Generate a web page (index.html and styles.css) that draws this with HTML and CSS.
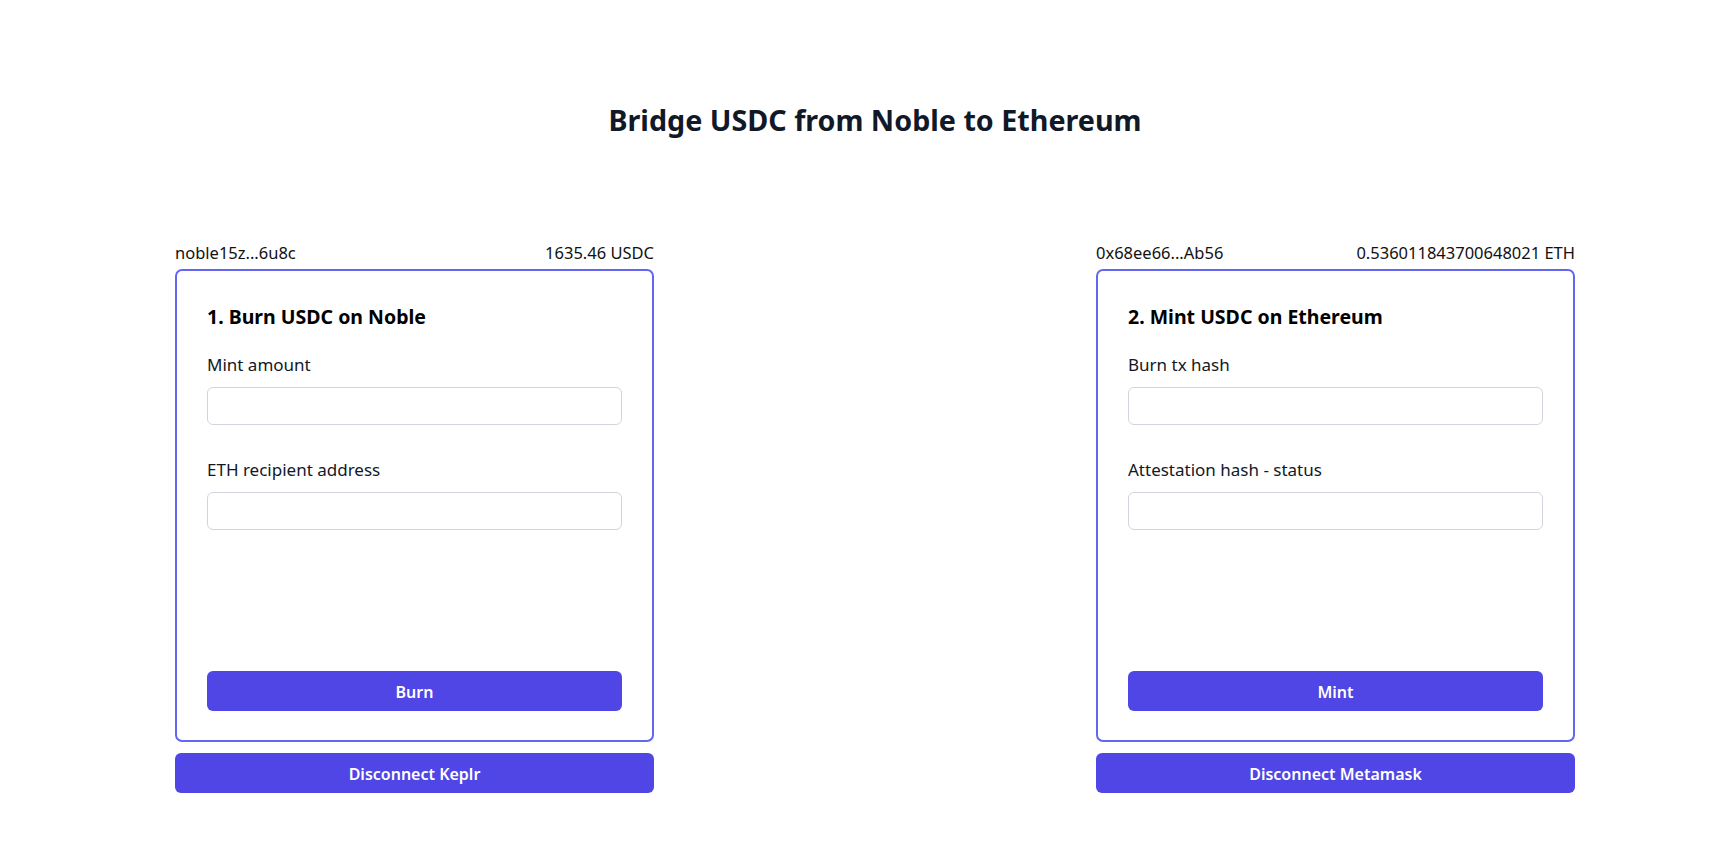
FILE: index.html
```html
<!DOCTYPE html>
<html lang="en">
<head>
<meta charset="utf-8">
<title>Bridge USDC from Noble to Ethereum</title>
<link rel="stylesheet" href="styles.css">
</head>
<body>
<main class="page">
  <h1 class="title">Bridge USDC from Noble to Ethereum</h1>
  <div class="columns">
    <section class="column">
      <div class="wallet">
        <span>noble15z...6u8c</span>
        <span>1635.46 USDC</span>
      </div>
      <div class="card">
        <h2 class="card-title">1. Burn USDC on Noble</h2>
        <label class="field">
          <span class="label">Mint amount</span>
          <input class="input" type="text">
        </label>
        <label class="field">
          <span class="label">ETH recipient address</span>
          <input class="input" type="text">
        </label>
        <button class="btn card-btn">Burn</button>
      </div>
      <button class="btn disconnect">Disconnect Keplr</button>
    </section>
    <section class="column">
      <div class="wallet">
        <span>0x68ee66...Ab56</span>
        <span>0.536011843700648021 ETH</span>
      </div>
      <div class="card">
        <h2 class="card-title">2. Mint USDC on Ethereum</h2>
        <label class="field">
          <span class="label">Burn tx hash</span>
          <input class="input" type="text">
        </label>
        <label class="field">
          <span class="label">Attestation hash - status</span>
          <input class="input" type="text">
        </label>
        <button class="btn card-btn">Mint</button>
      </div>
      <button class="btn disconnect">Disconnect Metamask</button>
    </section>
  </div>
</main>
</body>
</html>
```

FILE: styles.css
```css
* { box-sizing: border-box; }
html, body { margin: 0; padding: 0; background: #ffffff; }
body {
  font-family: "Noto Sans", "Open Sans", sans-serif;
  color: #111827;
}
.page {
  padding: 0 157px 0 175px;
}
.title {
  margin: 0;
  padding-top: 100px;
  text-align: center;
  font-size: 28.7px;
  line-height: 40px;
  font-weight: 700;
  color: #111827;
}
.columns {
  margin-top: 101px;
  display: flex;
  justify-content: space-between;
}
.column {
  width: 479px;
  display: flex;
  flex-direction: column;
}
.wallet {
  display: flex;
  justify-content: space-between;
  font-size: 16.5px;
  line-height: 24px;
  color: #111;
  margin-bottom: 4px;
}
.card {
  height: 473px;
  border: 2px solid #6366f1;
  border-radius: 7px;
  padding: 32px 30px 29px;
  display: flex;
  flex-direction: column;
}
.card-title {
  margin: 0 0 22px;
  font-size: 19.5px;
  line-height: 28px;
  font-weight: 700;
  color: #000;
}
.field {
  display: flex;
  flex-direction: column;
  gap: 10px;
  margin-bottom: 33px;
}
.label {
  font-size: 17px;
  line-height: 24px;
  color: #111827;
}
.input {
  height: 38px;
  border: 1px solid #d1d5db;
  border-radius: 6px;
  background: #fff;
  font: inherit;
}
.btn {
  height: 40px;
  border: 0;
  border-radius: 6px;
  background: #4f46e5;
  color: #fff;
  font-family: inherit;
  font-size: 16px;
  font-weight: 600;
  padding-top: 2px;
}
.card-btn {
  margin-top: auto;
  width: 100%;
}
.disconnect {
  margin-top: 11px;
  width: 100%;
}
```
